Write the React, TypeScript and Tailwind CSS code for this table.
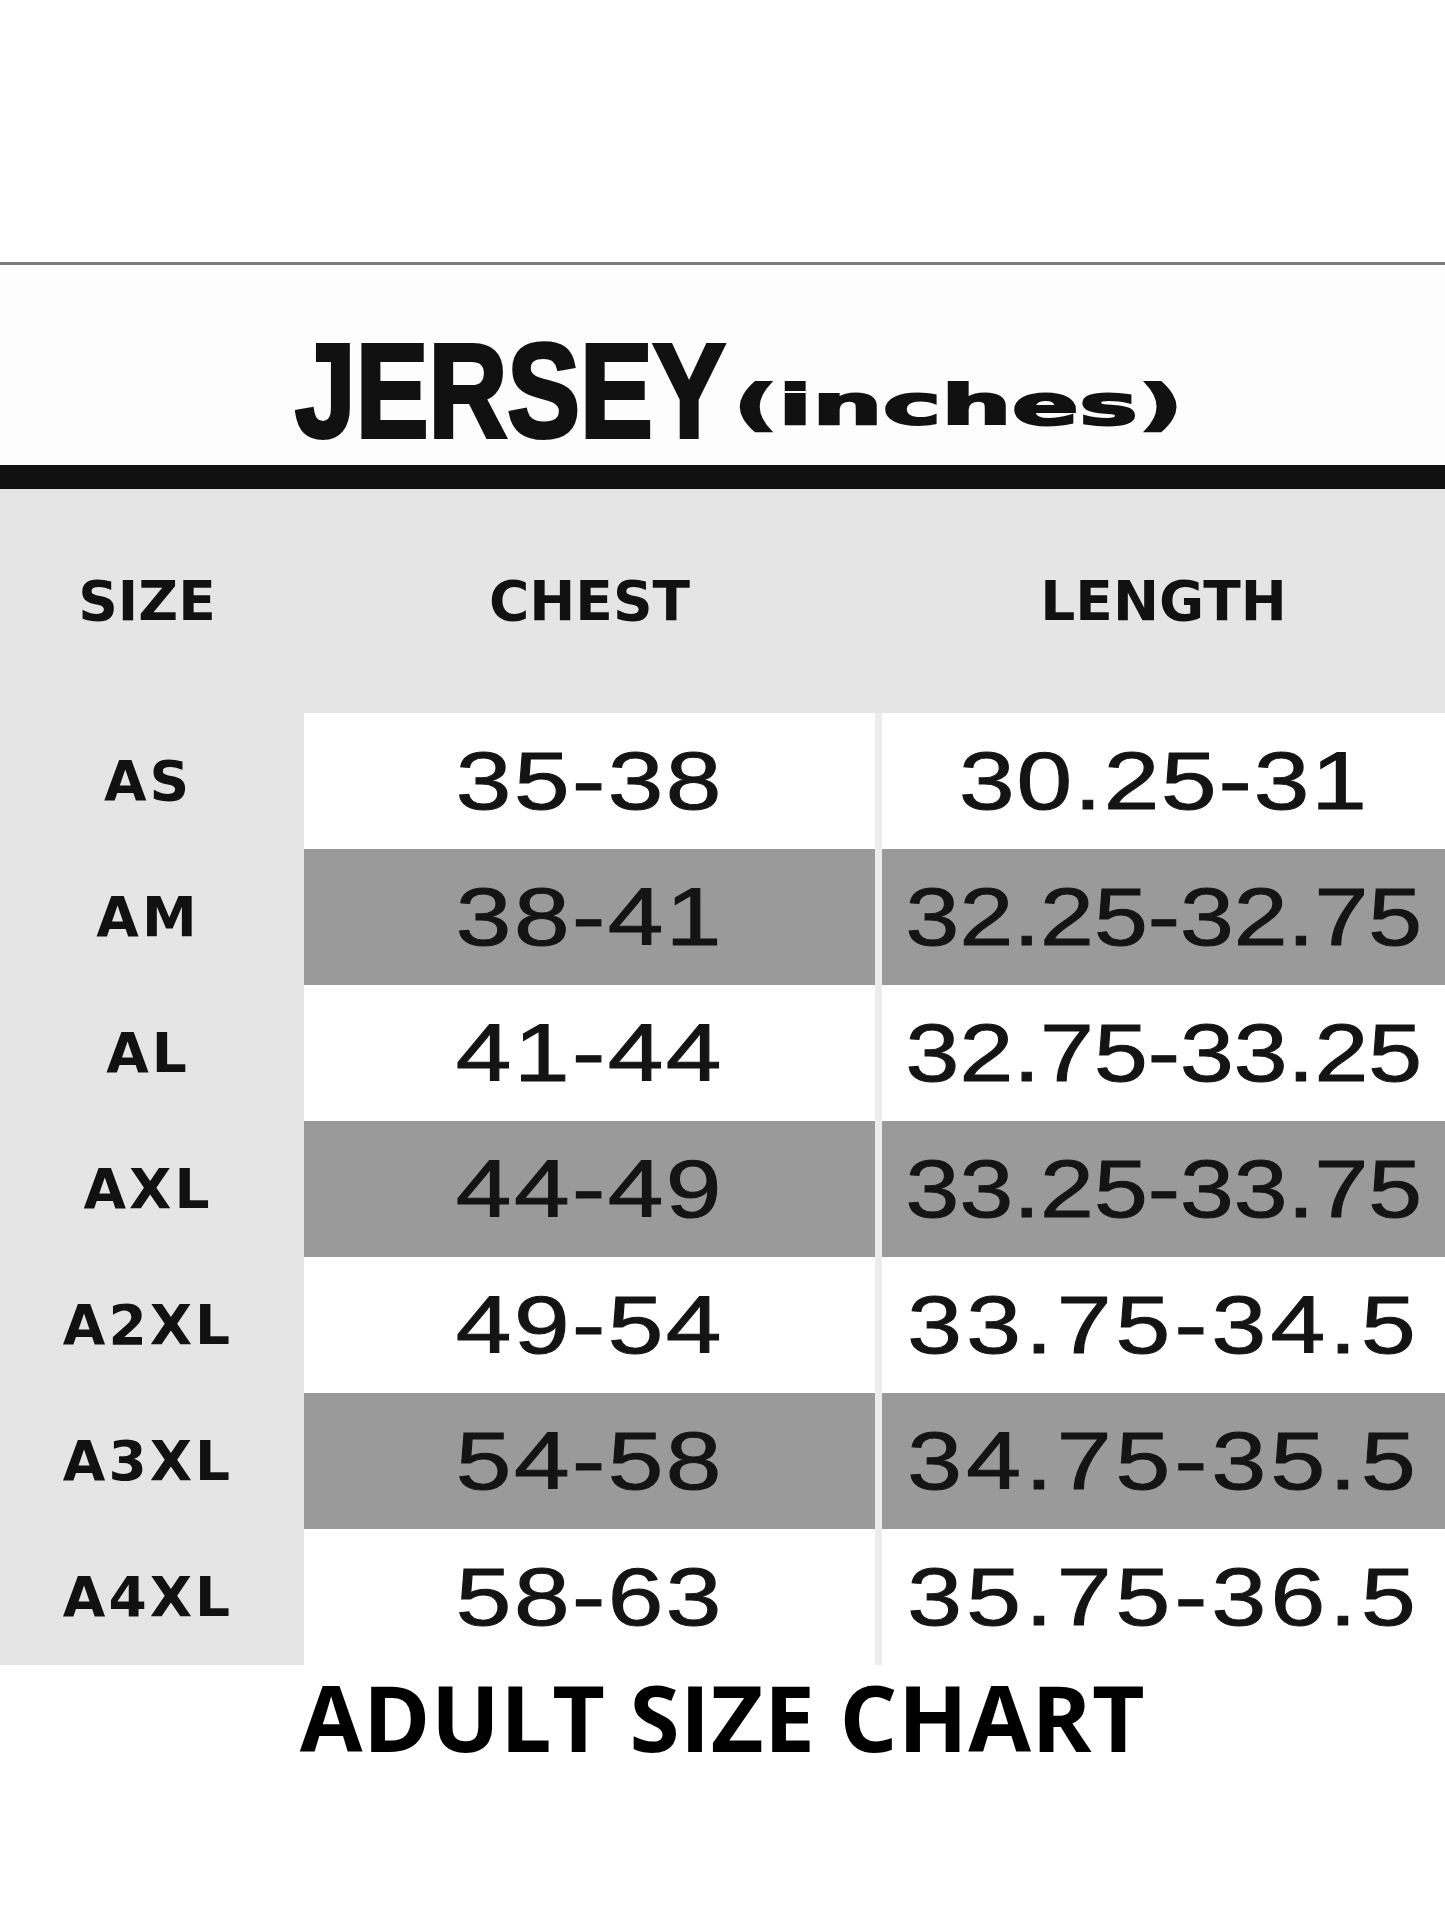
import React from "react";

type Row = {
  size: string;
  chest: string;
  length: string;
  gray: boolean;
  lt: string;
};

const rows: Row[] = [
  { size: "AS", chest: "35-38", length: "30.25-31", gray: false, lt: "scale-x-[1.22] tracking-[1.5px]" },
  { size: "AM", chest: "38-41", length: "32.25-32.75", gray: true, lt: "scale-x-[1.18] tracking-[0px]" },
  { size: "AL", chest: "41-44", length: "32.75-33.25", gray: false, lt: "scale-x-[1.18] tracking-[0px]" },
  { size: "AXL", chest: "44-49", length: "33.25-33.75", gray: true, lt: "scale-x-[1.18] tracking-[0px]" },
  { size: "A2XL", chest: "49-54", length: "33.75-34.5", gray: false, lt: "scale-x-[1.2] tracking-[3.5px]" },
  { size: "A3XL", chest: "54-58", length: "34.75-35.5", gray: true, lt: "scale-x-[1.2] tracking-[3.5px]" },
  { size: "A4XL", chest: "58-63", length: "35.75-36.5", gray: false, lt: "scale-x-[1.2] tracking-[3.5px]" },
];

const head = "font-['DejaVu_Sans',sans-serif] font-bold text-[55px] leading-none text-[#111]";
const num =
  "inline-block font-['Liberation_Sans',Arial,sans-serif] text-[82px] leading-none text-[#141414] [-webkit-text-stroke:1px_#141414]";

export default function App() {
  return (
    <div className="w-[1445px] min-h-[1927px] bg-white">
      <div className="h-[262px] bg-white" />
      <div className="h-[3px] bg-[#7d7d7d]" />
      <div className="h-[200px] bg-[#fdfdfd] flex items-start pl-[295px] pt-[60px]">
        <div className="w-[438px] shrink-0">
          <span className="inline-block origin-left scale-x-[0.82] font-['Liberation_Sans',Arial,sans-serif] font-bold text-[133px] leading-none text-[#111] [-webkit-text-stroke:4px_#111]">
            JERSEY
          </span>
        </div>
        <div className="mt-[53px] shrink-0">
          <span className="inline-block origin-left scale-x-[1.8] font-['DejaVu_Sans',sans-serif] font-bold text-[55px] leading-none tracking-[0px] text-[#111] [-webkit-text-stroke:2px_#111]">
            (inches)
          </span>
        </div>
      </div>
      <div className="h-[24px] bg-[#111111]" />
      <div className="grid grid-cols-[304px_571px_7px_1fr] bg-[#e5e5e5]">
        <div className="h-[224px] flex items-center justify-center pr-[10px]">
          <span className={head}>SIZE</span>
        </div>
        <div className="h-[224px] flex items-center justify-center">
          <span className={head}>CHEST</span>
        </div>
        <div className="h-[224px]" />
        <div className="h-[224px] flex items-center justify-center">
          <span className={head}>LENGTH</span>
        </div>
        {rows.map((r) => (
          <React.Fragment key={r.size}>
            <div className="h-[136px] flex items-center justify-center pr-[8px]">
              <span className="font-['DejaVu_Sans',sans-serif] font-bold text-[55px] leading-none tracking-[3px] text-[#111]">
                {r.size}
              </span>
            </div>
            <div className={`h-[136px] flex items-center justify-center ${r.gray ? "bg-[#9a9a9a]" : "bg-white"}`}>
              <span className={`${num} scale-x-[1.22] tracking-[2px]`}>{r.chest}</span>
            </div>
            <div className="h-[136px] bg-[#ececec]" />
            <div className={`h-[136px] flex items-center justify-center ${r.gray ? "bg-[#9a9a9a]" : "bg-white"}`}>
              <span className={`${num} ${r.lt}`}>{r.length}</span>
            </div>
          </React.Fragment>
        ))}
      </div>
      <div className="mt-[7px] flex justify-center">
        <span className="font-['Open_Sans',sans-serif] font-bold text-[91px] leading-none tracking-[0.5px] text-black">
          ADULT SIZE CHART
        </span>
      </div>
    </div>
  );
}
